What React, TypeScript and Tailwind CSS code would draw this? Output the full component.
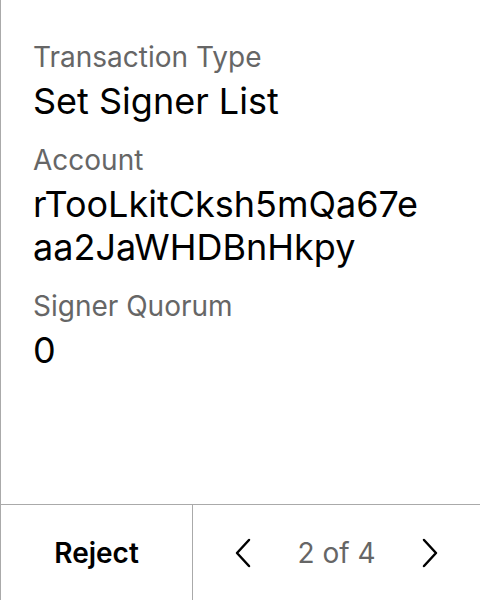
import React from 'react';

const Field: React.FC<{ label: string; value: string }> = ({ label, value }) => (
  <div className="flex flex-col">
    <span className="text-[28px] leading-[34px] text-[#666666]">{label}</span>
    <span className="mt-[6px] text-[36px] leading-[43px] text-black break-all">{value}</span>
  </div>
);

const App: React.FC = () => {
  return (
    <div
      className="w-[480px] h-[600px] flex flex-col bg-white border-l border-[#aaaaaa]"
      style={{ fontFamily: 'Inter, "Noto Sans", sans-serif' }}
    >
      <div className="flex-1 flex flex-col gap-[20px] pl-8 pr-[52px] pt-[40px]">
        <Field label="Transaction Type" value="Set Signer List" />
        <Field label="Account" value="rTooLkitCksh5mQa67eaa2JaWHDBnHkpy" />
        <Field label="Signer Quorum" value="0" />
      </div>
      <div className="h-[96px] flex border-t border-[#aaaaaa]">
        <button className="w-[191px] flex items-center justify-center text-[28px] font-semibold text-black">
          Reject
        </button>
        <div className="flex-1 flex items-center justify-between border-l border-[#aaaaaa] pl-[40px] pr-[40px]">
          <svg width="20" height="32" viewBox="0 0 20 32" fill="none" stroke="black" strokeWidth="2.5" strokeLinecap="round" strokeLinejoin="round">
            <path d="M16 3 L4 16 L16 29" />
          </svg>
          <span className="text-[28px] text-[#666666]">2 of 4</span>
          <svg width="20" height="32" viewBox="0 0 20 32" fill="none" stroke="black" strokeWidth="2.5" strokeLinecap="round" strokeLinejoin="round">
            <path d="M4 3 L16 16 L4 29" />
          </svg>
        </div>
      </div>
    </div>
  );
};

export default App;
